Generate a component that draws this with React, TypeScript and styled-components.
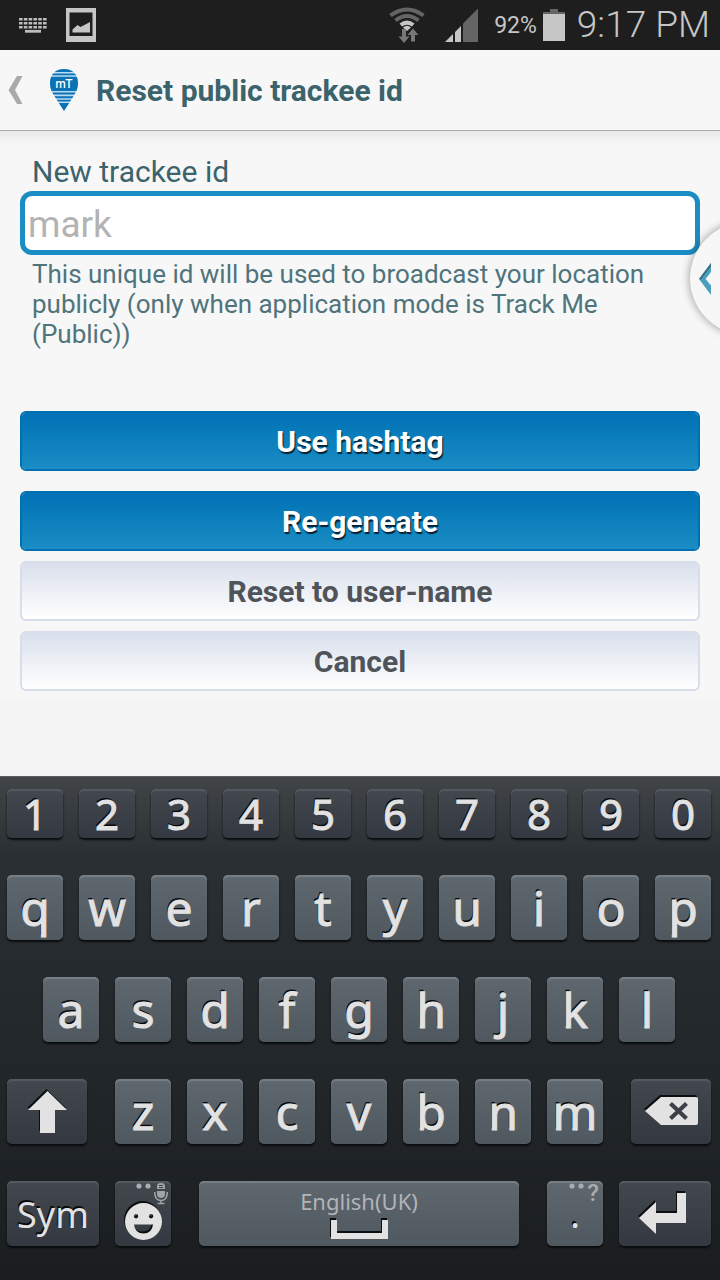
import React from "react";
import styled, { createGlobalStyle, css } from "styled-components";

const GlobalStyle = createGlobalStyle`
  *, *::before, *::after { box-sizing: border-box; }
  body { margin: 0; background: #f4f4f4; font-family: Roboto, "Liberation Sans", sans-serif; }
  button, input { font: inherit; margin: 0; padding: 0; border: 0; }
  svg { display: block; flex: none; }
`;

const Screen = styled.div`
  display: flex;
  flex-direction: column;
  min-height: 100vh;
  position: relative;
  overflow: hidden;
`;

const StatusBar = styled.div`
  display: flex;
  align-items: center;
  justify-content: space-between;
  height: 50px;
  padding: 0 10px 0 18px;
  background: #1e1e1e;
  color: #c6c6c6;
`;

const StatusGroup = styled.div<{ $gap: number }>`
  display: flex;
  align-items: center;
  gap: ${(p) => p.$gap}px;
`;

const Percent = styled.span`
  font-size: 23px;
  line-height: 32px;
  padding-top: 2px;
  margin-right: -10px;
`;

const Clock = styled.time`
  font-size: 37px;
  font-weight: 300;
  line-height: 50px;
`;

const Header = styled.header`
  display: flex;
  align-items: center;
  height: 81px;
  padding: 0 8px;
  background: #f7f7f7;
  border-bottom: 1px solid #a9a9a9;
`;

const BackLink = styled.a`
  display: flex;
  align-items: center;
  gap: 26px;
`;

const Title = styled.h1`
  margin: 0 0 0 17px;
  padding-top: 2px;
  font-size: 30px;
  line-height: 40px;
  font-weight: 700;
  color: #3b636b;
`;

const Form = styled.form`
  display: flex;
  flex-direction: column;
  padding: 21px 20px 9px;
  background: linear-gradient(#e9e9e9, #f7f7f7 14px);
`;

const Label = styled.label`
  padding: 0 12px;
  margin-bottom: -1px;
  font-size: 30px;
  line-height: 40px;
  color: #3b636b;
`;

const TextInput = styled.input`
  width: 100%;
  height: 64px;
  padding: 2px 3px 0;
  border: 5px solid #1a8dc5;
  border-radius: 12px;
  background: #fff;
  color: #333;
  font-size: 37px;
  outline: none;
  &::placeholder { color: #b3b3b3; opacity: 1; }
`;

const Hint = styled.p`
  margin: 4px 0 62px;
  padding: 0 12px;
  font-size: 26px;
  line-height: 30px;
  color: #4f747b;
`;

const Actions = styled.div`
  display: flex;
  flex-direction: column;
  gap: 10px;
`;

const ActionButton = styled.button<{ $primary?: boolean; $spaced?: boolean }>`
  height: 60px;
  padding-top: 2px;
  border-radius: 6px;
  font-size: 30px;
  line-height: 40px;
  font-weight: 700;
  ${(p) =>
    p.$primary
      ? css`
          color: #fff;
          text-shadow: 1px 2px 1px #062032;
          border: 2px solid #0070b3;
          background: linear-gradient(#0072b5, #1a8dc5) padding-box;
        `
      : css`
          color: #4f545b;
          border: 2px solid #d7ddea;
          background: linear-gradient(#d9dfeb, #fff) padding-box;
        `}
  ${(p) => p.$spaced && "margin-bottom: 10px;"}
`;

const DrawerHandle = styled.button`
  position: absolute;
  top: 222px;
  right: -83px;
  width: 113px;
  height: 113px;
  padding-left: 9px;
  border-radius: 50%;
  background: #f7f7f7;
  box-shadow: 0 0 10px rgba(0, 0, 0, 0.4);
`;

const Keyboard = styled.section`
  display: flex;
  flex-direction: column;
  gap: 37px;
  margin-top: auto;
  padding: 12px 9px 34px 7px;
  border-top: 1px solid #59605f;
  background: linear-gradient(#414548, #2a2f33 80px, #1a1e21);
`;

const KeyRow = styled.div<{ $inset?: boolean }>`
  display: flex;
  gap: 16px;
  ${(p) => p.$inset && "padding: 0 36px;"}
`;

const KeyGroup = styled.div`
  display: flex;
  flex: 488 1 0;
  gap: 16px;
  margin: 0 12px;
`;

type KeyKind = "letter" | "digit" | "word" | "icon";

const keyKinds = {
  letter: css`
    height: 65px;
    font-size: 48px;
    -webkit-text-stroke: 1px #e2e2e2;
  `,
  digit: css`
    height: 49px;
    font-size: 42px;
    -webkit-text-stroke: 1px #e2e2e2;
  `,
  word: css`
    height: 65px;
    padding-top: 2px;
    font-size: 36px;
  `,
  icon: css`
    height: 65px;
  `,
};

const Key = styled.button<{ $kind: KeyKind; $dark?: boolean; $grow?: number; $wide?: boolean; $low?: boolean }>`
  position: relative;
  display: flex;
  flex: ${(p) => p.$grow ?? 56} 1 0;
  flex-direction: column;
  align-items: center;
  justify-content: center;
  min-width: 0;
  margin: ${(p) => (p.$wide ? "0 12px" : "0")};
  border-radius: 5px;
  color: #e2e2e2;
  font-family: "Noto Sans", "Open Sans", sans-serif;
  line-height: 48px;
  text-shadow: -1px -2px 0 #080a0c;
  background: ${(p) => (p.$dark ? "linear-gradient(#43474e, #343840)" : "linear-gradient(#5f676f, #50585f)")};
  box-shadow: inset 0 2px 1px ${(p) => (p.$dark ? "#555a60" : "#788085")}, 0 2px 2px #090b0d;
  ${(p) => keyKinds[p.$kind]}
  ${(p) => p.$low && "padding-top: 16px;"}
`;

const Language = styled.span`
  margin-bottom: 6px;
  font-size: 22px;
  line-height: 26px;
  color: #b2b4b6;
  text-shadow: none;
`;

const KeyExtra = styled.span<{ $inset: number }>`
  position: absolute;
  top: 2px;
  right: ${(p) => p.$inset}px;
  display: flex;
  gap: 3px;
  color: #a9adb0;
  font-family: Roboto, sans-serif;
  font-size: 24px;
  font-weight: 500;
  line-height: 20px;
  text-shadow: none;
  -webkit-text-stroke: 0;
`;

const KeyboardIcon = () => (
  <svg width="30" height="34" viewBox="0 0 30 34" stroke="#bcbcbc" fill="none">
    <path d="M1 11.200h28M1 15.200h28M1 19.200h28" strokeWidth="2.600" strokeDasharray="3.600 1.200" />
    <path d="M7 23.300h16" strokeWidth="2.800" />
  </svg>
);

const PictureIcon = () => (
  <svg width="30" height="34" viewBox="0 0 30 34">
    <path fill="#c6c6c6" fillRule="evenodd" d="M0 0h30v34H0zM3.500 4.500v23.500h23V4.500z" />
    <path fill="#c6c6c6" d="M6.500 24.500v-3l5-4.500 3 2 9.500-5v10.500z" />
  </svg>
);

const WifiIcon = () => (
  <svg width="36" height="36" viewBox="0 0 36 36" fill="none">
    <path stroke="#656565" strokeWidth="4" d="M1.500 8.500Q18-3.500 34.500 8.500" />
    <path stroke="#656565" strokeWidth="4" d="M6.500 13.500Q18 4.500 29.500 13.500" />
    <path fill="#c6c6c6" d="M10.500 16.500Q18 10.500 25.500 16.500L23 19.500Q18 16 13 19.500z" />
    <path fill="#c6c6c6" d="M14 20.500Q18 17 22 20.500L18 24z" />
    <path fill="#777" d="M13 22h4v7.500h3.500L15 36l-5.500-6.500H13zM22 34.500h4v-6.500h3.500L24 21.500 18.500 28H22z" />
  </svg>
);

const SignalIcon = () => (
  <svg width="33" height="34" viewBox="0 0 33 34">
    <path fill="#c6c6c6" d="M0 34l8-8v8zM10 34V24l6-6v16z" />
    <path fill="#656565" d="M18 34V15.500L33 .5V34z" />
  </svg>
);

const BatteryIcon = () => (
  <svg width="22" height="32" viewBox="0 0 22 32">
    <path fill="#656565" d="M7 0h8v3h7v3H0V3h7z" />
    <path fill="#c6c6c6" d="M0 5h22v27H0z" />
  </svg>
);

const BackIcon = () => (
  <svg width="15" height="28" viewBox="0 0 15 28">
    <path fill="#aaa" d="M9 0h5.500L7 14l7.500 14H9L.5 14z" />
  </svg>
);

const LogoIcon = () => (
  <svg width="30" height="43" viewBox="0 0 30 43">
    <defs>
      <clipPath id="balloon">
        <path d="M15 0C24 0 29 6 29 14c0 6-2 9-5 14L15 42 6 28C3 23 1 20 1 14 1 6 6 0 15 0z" />
      </clipPath>
    </defs>
    <g clipPath="url(#balloon)">
      <path fill="#b9dcf0" d="M0 0h30v43H0z" />
      <path
        fill="#0a72b5"
        d="M0 0h30v3H0zM0 4.500h30v1.700H0zM0 7.700h30v14.300H0zM0 23.500h30v2H0zM0 27.200h30v2H0zM0 30.700h30v1.800H0zM0 34h30v9H0z"
      />
    </g>
    <text x="15" y="19" textAnchor="middle" fill="#fff" fontFamily="Inter, sans-serif" fontSize="12" fontWeight="500">mT</text>
  </svg>
);

const HandleIcon = () => (
  <svg width="12" height="32" viewBox="0 0 12 32">
    <path fill="#4b9fbd" d="M12 0v9L6.500 16l5.500 6.500V32L0 16z" />
    <path fill="#3a6e7c" d="M12 0v3L2 16.500 0 16z" />
  </svg>
);

const Glyph = styled.svg`
  overflow: visible;
  fill: #e2e2e2;
  filter: drop-shadow(-1px -2px 0 #0c0e10);
`;

const ShiftIcon = () => (
  <Glyph width="39" height="42" viewBox="0 0 39 42">
    <path d="M19.500 0L39 19H27v23H12V19H0z" />
  </Glyph>
);

const DeleteIcon = () => (
  <Glyph width="53" height="30" viewBox="0 0 53 30">
    <path fillRule="evenodd" d="M16 0h35q2 0 2 2v24q0 2-2 2H16L0 14z" />
    <path d="M25.500 6.500l16 15M41.500 6.500l-16 15" stroke="#3c4147" strokeWidth="4.200" />
  </Glyph>
);

const EnterIcon = () => (
  <Glyph width="52" height="42" viewBox="0 0 52 42">
    <path d="M0 25L17 9v11h21V0h9v30H17v11z" />
  </Glyph>
);

const SpaceIcon = () => (
  <Glyph width="57" height="19" viewBox="0 0 57 19">
    <path d="M0 0h6v13h45V0h6v19H0z" />
  </Glyph>
);

const SmileIcon = () => (
  <Glyph width="37" height="37" viewBox="0 0 37 37">
    <path
      fillRule="evenodd"
      d="M18.500 0a18.500 18.500 0 1 1 0 37a18.500 18.500 0 1 1 0-37zM11 11a2.200 2.200 0 1 0 .1 0zM26 11a2.200 2.200 0 1 0 .1 0zM9 21.500h19q-1 9-9.500 9T9 21.500z"
    />
  </Glyph>
);

const Dots = () => (
  <svg width="15" height="6" viewBox="0 0 15 6" fill="#a9adb0">
    <circle cx="3" cy="3" r="2.600" />
    <circle cx="12" cy="3" r="2.600" />
  </svg>
);

const MicIcon = () => (
  <svg width="14" height="22" viewBox="0 0 14 22" fill="none" stroke="#a0a4a7">
    <path fill="#a0a4a7" stroke="none" fillRule="evenodd" d="M3 6V3q0-3 4-3t4 3v3zM5 2v1h4V2zM5 4v1h4V4zM3 8h8v3q0 4-4 4t-4-4z" />
    <path strokeWidth="1.500" d="M.7 9q0 8.500 6.300 8.500T13.300 9M7 17.500V20M3.500 20.500h7" />
  </svg>
);

const letterKeys = (chars: string) =>
  chars.split("").map((c) => (
    <Key type="button" $kind="letter" key={c}>{c}</Key>
  ));

export default function App() {
  return (
    <Screen>
      <GlobalStyle />
      <StatusBar>
        <StatusGroup $gap={18}>
          <KeyboardIcon />
          <PictureIcon />
        </StatusGroup>
        <StatusGroup $gap={16}>
          <StatusGroup $gap={20}>
            <WifiIcon />
            <SignalIcon />
          </StatusGroup>
          <Percent>92%</Percent>
          <StatusGroup $gap={12}>
            <BatteryIcon />
            <Clock>9:17 PM</Clock>
          </StatusGroup>
        </StatusGroup>
      </StatusBar>
      <Header>
        <BackLink href="#" aria-label="Back">
          <BackIcon />
          <LogoIcon />
        </BackLink>
        <Title>Reset public trackee id</Title>
      </Header>
      <Form onSubmit={(e) => e.preventDefault()}>
        <Label htmlFor="trackee">New trackee id</Label>
        <TextInput id="trackee" type="text" placeholder="mark" />
        <Hint>
          This unique id will be used to broadcast your location publicly (only when application mode is Track Me
          (Public))
        </Hint>
        <Actions>
          <ActionButton type="button" $primary $spaced>Use hashtag</ActionButton>
          <ActionButton type="button" $primary>Re-geneate</ActionButton>
          <ActionButton type="button">Reset to user-name</ActionButton>
          <ActionButton type="button">Cancel</ActionButton>
        </Actions>
      </Form>
      <DrawerHandle type="button" aria-label="Open drawer">
        <HandleIcon />
      </DrawerHandle>
      <Keyboard aria-label="Keyboard">
        <KeyRow>
          {"1234567890".split("").map((c) => (
            <Key type="button" $kind="digit" $dark key={c}>{c}</Key>
          ))}
        </KeyRow>
        <KeyRow>{letterKeys("qwertyuiop")}</KeyRow>
        <KeyRow $inset>{letterKeys("asdfghjkl")}</KeyRow>
        <KeyRow>
          <Key type="button" $kind="icon" $dark $grow={80} aria-label="Shift"><ShiftIcon /></Key>
          <KeyGroup>{letterKeys("zxcvbnm")}</KeyGroup>
          <Key type="button" $kind="icon" $dark $grow={80} aria-label="Delete"><DeleteIcon /></Key>
        </KeyRow>
        <KeyRow>
          <Key type="button" $kind="word" $dark $grow={92}>Sym</Key>
          <Key type="button" $kind="icon" $dark $low aria-label="Emoji">
            <KeyExtra $inset={3}><Dots /><MicIcon /></KeyExtra>
            <SmileIcon />
          </Key>
          <Key type="button" $kind="icon" $grow={320} $wide>
            <Language>English(UK)</Language>
            <SpaceIcon />
          </Key>
          <Key type="button" $kind="word">
            <KeyExtra $inset={4}><Dots />?</KeyExtra>
            .
          </Key>
          <Key type="button" $kind="icon" $dark $grow={92} aria-label="Enter"><EnterIcon /></Key>
        </KeyRow>
      </Keyboard>
    </Screen>
  );
}
